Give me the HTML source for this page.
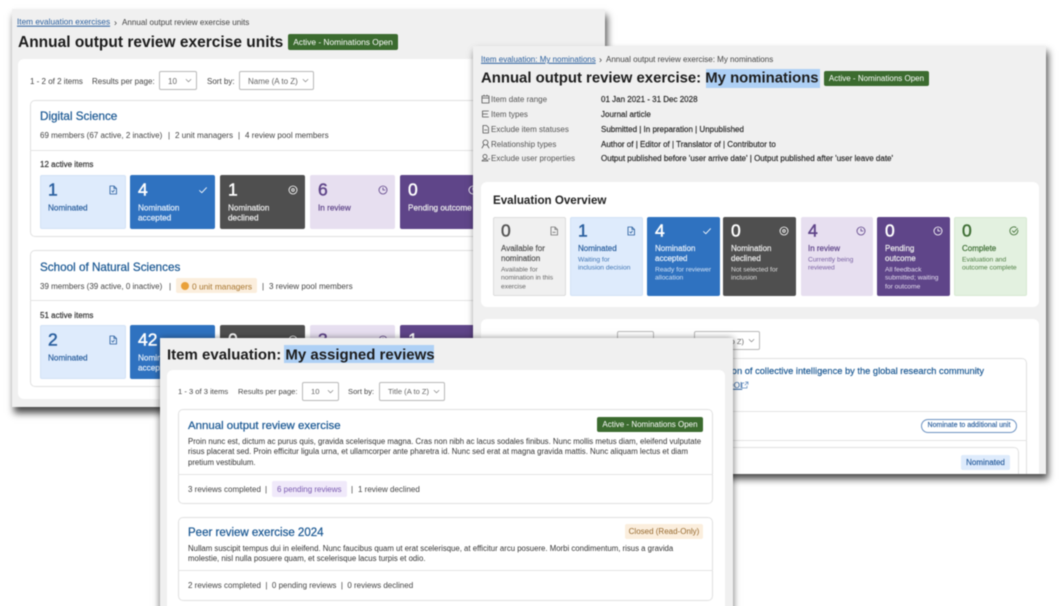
<!DOCTYPE html>
<html lang="en"><head><meta charset="utf-8"><title>Item evaluation</title>
<style>
html,body{margin:0;padding:0;background:#fff;width:1063px;height:606px;overflow:hidden}
body{font-family:"Liberation Sans",sans-serif;color:#333}
#clip{position:relative;width:1063px;height:606px;overflow:hidden;contain:strict}
#root{position:absolute;left:0;top:0;width:1080px;height:630px;overflow:hidden;filter:blur(.4px)}
.sh{position:absolute}
.win{position:absolute;overflow:hidden;background:#f0f0f0}
.in{position:absolute;width:1063px;height:630px}
.b{position:absolute;box-sizing:border-box}
.t{position:absolute;white-space:nowrap;line-height:1;transform:translateY(calc(-50% + .8px));font-size:8px;color:#444}
.n{font-size:17.5px !important;transform:translateY(-50%);-webkit-text-stroke:.45px currentColor}
.m{-webkit-text-stroke:.2px currentColor}
.w1{font-size:8.2px}
.s{font-size:6.7px}
.h{font-weight:bold;font-size:15px;color:#1c1c1c}
.card{position:absolute;box-sizing:border-box;background:#fff;border-radius:6px}
.box{position:absolute;box-sizing:border-box;background:#fff;border:1px solid #e1e1e1;border-radius:5px}
.line{position:absolute;height:1px;background:#e4e4e4}
.sel{position:absolute;box-sizing:border-box;background:#fff;border:1px solid #b9b9b9;border-radius:2px;height:19px}
.sel svg{position:absolute;right:4px;top:6px}
.bd{position:absolute;box-sizing:border-box;border-radius:2px;background:#3b6b2f;color:#fff;font-size:8px;line-height:16px;text-align:center;white-space:nowrap}
.ti{position:absolute;box-sizing:border-box;border-radius:2px}
.tt{color:#1d5a94;font-weight:normal;-webkit-text-stroke:.25px #1d5a94}
svg.i{position:absolute;fill:none;stroke:currentColor;stroke-width:.85;stroke-linecap:round;stroke-linejoin:round}
a{color:#2a5f9e;text-decoration:underline}
.nom{background:#deebfc;color:#2a5f9e;border:1px solid #d2e2f6}
.acc{background:#2f72c0;color:#fff}
.dec{background:#4f4f4f;color:#fff}
.rev{background:#e7dff0;color:#5f4589}
.pen{background:#5f4589;color:#fff}
.ava{background:#f0f0f0;color:#555;border:1px solid #dcdcdc}
.com{background:#e3f1e0;color:#3f6f35;border:1px solid #d7e9d2}
</style></head><body>
<svg width="0" height="0" style="position:absolute">
<defs>
<symbol id="doc" viewBox="0 0 10 10"><path d="M2 1h4l2.500 2.500V9H2zM6 1v2.500h2.500M3.800 6l1 1 1.500-1.800"/></symbol>
<symbol id="doc2" viewBox="0 0 10 10"><path d="M2 1h4l2.500 2.500V9H2zM6 1v2.500h2.500M3.800 6.300h2.500"/></symbol>
<symbol id="chk" viewBox="0 0 10 10"><path d="M1.500 5.500l2.300 2.200 4.700-5"/></symbol>
<symbol id="xc" viewBox="0 0 10 10"><circle cx="5" cy="5" r="4"/><circle cx="5" cy="5" r="1.300"/></symbol>
<symbol id="clk" viewBox="0 0 10 10"><circle cx="5" cy="5" r="4"/><path d="M5 2.800V5h2"/></symbol>
<symbol id="cc" viewBox="0 0 10 10"><path d="M8.800 4.200A4 4 0 1 1 7 1.500M3.400 4.800l1.500 1.500 3.600-3.800"/></symbol>
<symbol id="dn" viewBox="0 0 8 5"><path d="M1 1l3 3 3-3" fill="none" stroke="#777" stroke-width=".8"/></symbol>
</defs></svg>
<div id="clip">
<div id="root">

<!-- WINDOW 1 -->
<div class="sh" style="left:12px;top:9px;width:593px;height:398px;box-shadow:2px 6px 7px rgba(0,0,0,.72)"></div>
<div class="win" style="left:12px;top:9px;width:593px;height:398px"><div class="in" style="left:-12px;top:-9px">
<div class="t" style="left:17px;top:22px;font-size:8.250px"><a>Item evaluation exercises</a></div>
<div class="t" style="left:114px;top:22px;font-size:9px">&#8250;</div>
<div class="t" style="left:122px;top:22px;font-size:8.100px">Annual output review exercise units</div>
<div class="t h" style="left:18px;top:42px;font-size:15.500px">Annual output review exercise units</div>
<div class="bd" style="left:288px;top:34px;width:110px;height:16px;font-size:8.400px">Active - Nominations Open</div>
<div class="card" style="left:18px;top:59px;width:581px;height:340px"></div>
<div class="t" style="left:30px;top:81px">1 - 2 of 2 items</div>
<div class="t" style="left:92px;top:81px">Results per page:</div>
<div class="sel" style="left:159px;top:71px;width:38px"><svg width="7" height="5"><use href="#dn"/></svg></div>
<div class="t" style="left:168px;top:81px;color:#666">10</div>
<div class="t" style="left:207px;top:81px">Sort by:</div>
<div class="sel" style="left:239px;top:71px;width:75px"><svg width="7" height="5"><use href="#dn"/></svg></div>
<div class="t" style="left:248px;top:81px;color:#666">Name (A to Z)</div>

<div class="box" style="left:30px;top:100px;width:560px;height:137px"></div>
<div class="t tt" style="left:40px;top:116px;font-size:11.700px">Digital Science</div>
<div class="t" style="left:40px;top:135px">69 members (67 active, 2 inactive)</div>
<div class="t" style="left:168px;top:135px">|</div>
<div class="t" style="left:175px;top:135px;font-size:8.100px">2 unit managers</div>
<div class="t" style="left:238px;top:135px">|</div>
<div class="t" style="left:245px;top:135px;font-size:8.100px">4 review pool members</div>
<div class="line" style="left:30px;top:150px;width:560px"></div>
<div class="t m" style="left:40px;top:164px;color:#333">12 active items</div>

<div class="ti nom" style="left:40px;top:175px;width:86px;height:54px"></div>
<div class="t n" style="left:48px;top:190px;color:#2a5f9e">1</div>
<div class="t m w1" style="left:48px;top:208px;color:#2a5f9e">Nominated</div>
<svg class="i" style="left:108px;top:185px;color:#2a5f9e" width="10" height="10"><use href="#doc"/></svg>

<div class="ti acc" style="left:130px;top:175px;width:85px;height:54px"></div>
<div class="t n" style="left:138px;top:190px;color:#fff">4</div>
<div class="t m w1" style="left:138px;top:208px;color:#e6effa">Nomination</div>
<div class="t m w1" style="left:138px;top:218px;color:#e6effa">accepted</div>
<svg class="i" style="left:198px;top:185px;color:#fff" width="10" height="10"><use href="#chk"/></svg>

<div class="ti dec" style="left:220px;top:175px;width:85px;height:54px"></div>
<div class="t n" style="left:228px;top:190px;color:#fff">1</div>
<div class="t m w1" style="left:228px;top:208px;color:#eee">Nomination</div>
<div class="t m w1" style="left:228px;top:218px;color:#eee">declined</div>
<svg class="i" style="left:288px;top:185px;color:#fff" width="10" height="10"><use href="#xc"/></svg>

<div class="ti rev" style="left:310px;top:175px;width:85px;height:54px"></div>
<div class="t n" style="left:318px;top:190px;color:#5f4589">6</div>
<div class="t m w1" style="left:318px;top:208px;color:#5f4589">In review</div>
<svg class="i" style="left:378px;top:185px;color:#5f4589" width="10" height="10"><use href="#clk"/></svg>

<div class="ti pen" style="left:400px;top:175px;width:85px;height:54px"></div>
<div class="t n" style="left:408px;top:190px;color:#fff">0</div>
<div class="t m w1" style="left:408px;top:208px;color:#eee">Pending outcome</div>
<svg class="i" style="left:468px;top:185px;color:#fff" width="10" height="10"><use href="#clk"/></svg>

<div class="box" style="left:30px;top:250px;width:560px;height:137px"></div>
<div class="t tt" style="left:40px;top:267px;font-size:11.700px">School of Natural Sciences</div>
<div class="t" style="left:40px;top:286px">39 members (39 active, 0 inactive)</div>
<div class="t" style="left:169px;top:286px">|</div>
<div class="b" style="left:176px;top:278px;width:81px;height:15px;background:#fbeedd;border-radius:2px"></div>
<div class="b" style="left:181px;top:282px;width:8px;height:8px;border-radius:50%;background:#e9a13b"></div>
<div class="t" style="left:192px;top:286px;color:#a8762f;font-size:8.400px">0 unit managers</div>
<div class="t" style="left:262px;top:286px">|</div>
<div class="t" style="left:269px;top:286px;font-size:8.100px">3 review pool members</div>
<div class="line" style="left:30px;top:300px;width:560px"></div>
<div class="t m" style="left:40px;top:315px;color:#333">51 active items</div>

<div class="ti nom" style="left:40px;top:325px;width:86px;height:54px"></div>
<div class="t n" style="left:48px;top:340px;color:#2a5f9e">2</div>
<div class="t m w1" style="left:48px;top:358px;color:#2a5f9e">Nominated</div>
<svg class="i" style="left:108px;top:335px;color:#2a5f9e" width="10" height="10"><use href="#doc"/></svg>
<div class="ti acc" style="left:130px;top:325px;width:85px;height:54px"></div>
<div class="t n" style="left:138px;top:340px;color:#fff">42</div>
<div class="t m w1" style="left:138px;top:358px;color:#e6effa">Nomination</div>
<div class="t m w1" style="left:138px;top:368px;color:#e6effa">accepted</div>
<div class="ti dec" style="left:220px;top:325px;width:85px;height:54px"></div>
<div class="t n" style="left:228px;top:340px;color:#fff">0</div>
<svg class="i" style="left:288px;top:335px;color:#fff" width="10" height="10"><use href="#xc"/></svg>
<div class="ti rev" style="left:310px;top:325px;width:85px;height:54px"></div>
<div class="t n" style="left:318px;top:340px;color:#5f4589">3</div>
<svg class="i" style="left:378px;top:335px;color:#5f4589" width="10" height="10"><use href="#clk"/></svg>
<div class="ti pen" style="left:400px;top:325px;width:85px;height:54px"></div>
<div class="t n" style="left:408px;top:340px;color:#fff">1</div>
</div></div>

<!-- WINDOW 2 -->
<div class="sh" style="left:473px;top:46px;width:573px;height:428px;box-shadow:2px 5px 7px rgba(0,0,0,.72)"></div>
<div class="win" style="left:473px;top:46px;width:573px;height:428px"><div class="in" style="left:-473px;top:-46px">
<div class="t" style="left:481px;top:59px"><a>Item evaluation: My nominations</a></div>
<div class="t" style="left:599px;top:59px;font-size:9px">&#8250;</div>
<div class="t" style="left:606px;top:59px">Annual output review exercise: My nominations</div>
<div class="b" style="left:705.500px;top:69px;width:114px;height:19px;background:#aed0f5"></div>
<div class="t h" style="left:481px;top:78px;font-size:14.900px">Annual output review exercise: My nominations</div>
<div class="bd" style="left:824px;top:71px;width:105px;height:15px;line-height:15px">Active - Nominations Open</div>

<svg class="i" style="left:481px;top:94px;color:#555" width="9" height="10" viewBox="0 0 9 10"><path d="M1 2h7v7H1zM1 4h7M3 1v1M6 1v1" stroke-width=".8"/></svg>
<svg class="i" style="left:481px;top:109px;color:#555" width="9" height="10" viewBox="0 0 9 10"><path d="M1.500 2v6M1.500 2h6M1.500 5h5M1.500 8h6" stroke-width=".8"/></svg>
<svg class="i" style="left:481px;top:124px;color:#555" width="9" height="10" viewBox="0 0 9 10"><path d="M2 1.500h3.500l2 2V9H2zM3.500 6h2.500" stroke-width=".8"/></svg>
<svg class="i" style="left:481px;top:139px;color:#555" width="9" height="10" viewBox="0 0 9 10"><circle cx="4.500" cy="3.500" r="2.500" stroke-width=".8"/><path d="M1 9l2-3.500M8 9L6 5.500" stroke-width=".8"/></svg>
<svg class="i" style="left:481px;top:153px;color:#555" width="9" height="10" viewBox="0 0 9 10"><circle cx="4" cy="3.500" r="2" stroke-width=".8"/><path d="M1 8c.5-2 5.500-2 6 0zM7.500 6h1.300" stroke-width=".8"/></svg>

<div class="t" style="left:491px;top:99px;color:#555">Item date range</div>
<div class="t" style="left:491px;top:114px;color:#555">Item types</div>
<div class="t" style="left:491px;top:129px;color:#555">Exclude item statuses</div>
<div class="t" style="left:491px;top:144px;color:#555">Relationship types</div>
<div class="t" style="left:491px;top:158px;color:#555">Exclude user properties</div>
<div class="t m" style="left:601px;top:99px;color:#222;-webkit-text-stroke:.15px #222">01 Jan 2021 - 31 Dec 2028</div>
<div class="t m" style="left:601px;top:114px;color:#222;-webkit-text-stroke:.15px #222">Journal article</div>
<div class="t m" style="left:601px;top:129px;color:#222;-webkit-text-stroke:.15px #222">Submitted | In preparation | Unpublished</div>
<div class="t m" style="left:601px;top:144px;color:#222;-webkit-text-stroke:.15px #222">Author of | Editor of | Translator of | Contributor to</div>
<div class="t m" style="left:601px;top:158px;color:#222;-webkit-text-stroke:.15px #222;font-size:8.020px">Output published before 'user arrive date' | Output published after 'user leave date'</div>

<div class="card" style="left:481px;top:182px;width:558px;height:125px"></div>
<div class="t" style="left:493px;top:200px;font-size:11.600px;color:#222;font-weight:bold">Evaluation Overview</div>

<div class="ti ava" style="left:493px;top:217px;width:73px;height:79px"></div>
<div class="t n" style="left:501px;top:231px;color:#555">0</div>
<div class="t m" style="left:501px;top:248px;color:#555">Available for</div>
<div class="t m" style="left:501px;top:258px;color:#555">nomination</div>
<div class="t s" style="left:501px;top:269.500px;color:#666">Available for</div>
<div class="t s" style="left:501px;top:278px;color:#666">nomination in this</div>
<div class="t s" style="left:501px;top:287px;color:#666">exercise</div>
<svg class="i" style="left:549px;top:226px;color:#777" width="10" height="10"><use href="#doc2"/></svg>

<div class="ti nom" style="left:570px;top:217px;width:73px;height:79px"></div>
<div class="t n" style="left:578px;top:231px;color:#2a5f9e">1</div>
<div class="t m" style="left:578px;top:248px;color:#2a5f9e">Nominated</div>
<div class="t s" style="left:578px;top:259.500px;color:#3f74b3">Waiting for</div>
<div class="t s" style="left:578px;top:268px;color:#3f74b3">inclusion decision</div>
<svg class="i" style="left:626px;top:226px;color:#2a5f9e" width="10" height="10"><use href="#doc"/></svg>

<div class="ti acc" style="left:647px;top:217px;width:73px;height:79px"></div>
<div class="t n" style="left:655px;top:231px;color:#fff">4</div>
<div class="t m" style="left:655px;top:248px;color:#e6effa">Nomination</div>
<div class="t m" style="left:655px;top:258px;color:#e6effa">accepted</div>
<div class="t s" style="left:655px;top:269.500px;color:#cfe0f5">Ready for reviewer</div>
<div class="t s" style="left:655px;top:278px;color:#cfe0f5">allocation</div>
<svg class="i" style="left:702px;top:226px;color:#fff" width="10" height="10"><use href="#chk"/></svg>

<div class="ti dec" style="left:723px;top:217px;width:73px;height:79px"></div>
<div class="t n" style="left:731px;top:231px;color:#fff">0</div>
<div class="t m" style="left:731px;top:248px;color:#eee">Nomination</div>
<div class="t m" style="left:731px;top:258px;color:#eee">declined</div>
<div class="t s" style="left:731px;top:269.500px;color:#ddd">Not selected for</div>
<div class="t s" style="left:731px;top:278px;color:#ddd">inclusion</div>
<svg class="i" style="left:779px;top:226px;color:#fff" width="10" height="10"><use href="#xc"/></svg>

<div class="ti rev" style="left:801px;top:217px;width:72px;height:79px"></div>
<div class="t n" style="left:808px;top:231px;color:#5f4589">4</div>
<div class="t m" style="left:808px;top:248px;color:#5f4589">In review</div>
<div class="t s" style="left:808px;top:259.500px;color:#7a62a3">Currently being</div>
<div class="t s" style="left:808px;top:268px;color:#7a62a3">reviewed</div>
<svg class="i" style="left:856px;top:226px;color:#5f4589" width="10" height="10"><use href="#clk"/></svg>

<div class="ti pen" style="left:877px;top:217px;width:73px;height:79px"></div>
<div class="t n" style="left:885px;top:231px;color:#fff">0</div>
<div class="t m" style="left:885px;top:248px;color:#eee">Pending</div>
<div class="t m" style="left:885px;top:258px;color:#eee">outcome</div>
<div class="t s" style="left:885px;top:269.500px;color:#e3dcee">All feedback</div>
<div class="t s" style="left:885px;top:278px;color:#e3dcee">submitted; waiting</div>
<div class="t s" style="left:885px;top:287px;color:#e3dcee">for outcome</div>
<svg class="i" style="left:933px;top:226px;color:#fff" width="10" height="10"><use href="#clk"/></svg>

<div class="ti com" style="left:954px;top:217px;width:73px;height:79px"></div>
<div class="t n" style="left:962px;top:231px;color:#3f6f35">0</div>
<div class="t m" style="left:962px;top:248px;color:#3f6f35">Complete</div>
<div class="t s" style="left:962px;top:259.500px;color:#4f7f44">Evaluation and</div>
<div class="t s" style="left:962px;top:268px;color:#4f7f44">outcome complete</div>
<svg class="i" style="left:1009px;top:226px;color:#3f6f35" width="10" height="10"><use href="#cc"/></svg>

<div class="card" style="left:481px;top:319px;width:558px;height:160px"></div>
<div class="sel" style="left:617px;top:331px;width:37px"></div>
<div class="sel" style="left:694px;top:331px;width:66px"><svg width="7" height="5"><use href="#dn"/></svg></div>
<div class="t" style="left:703px;top:341px;color:#666;font-size:7.600px">Title (A to Z)</div>
<div class="box" style="left:493px;top:358px;width:534px;height:130px"></div>
<div class="t tt" style="right:79px;top:371px;font-size:9.300px;-webkit-text-stroke:.2px #1d5a94">Evaluation of collective intelligence by the global research community</div>
<div class="t" style="left:728px;top:385px"><a>DOI</a></div>
<svg class="i" style="left:741px;top:381px;color:#5b86ba" width="8" height="8" viewBox="0 0 8 8"><path d="M6 5v2H1V2h2M4.500 1H7v2.500M7 1L4 4" stroke-width=".7"/></svg>
<div class="line" style="left:493px;top:411px;width:534px"></div>
<div class="b" style="left:921px;top:419px;width:96px;height:14px;border:1px solid #6d93c2;border-radius:7px;background:#fff;color:#2a5f9e;font-size:7px;line-height:12px;text-align:center;-webkit-text-stroke:.15px #2a5f9e;white-space:nowrap">Nominate to additional unit</div>
<div class="line" style="left:493px;top:440px;width:534px"></div>
<div class="box" style="left:503px;top:447px;width:516px;height:60px"></div>
<div class="b" style="left:961px;top:455px;width:49px;height:15px;background:#deebfc;border-radius:2px;color:#2a5f9e;font-size:8px;line-height:15px;text-align:center;-webkit-text-stroke:.15px #2a5f9e">Nominated</div>
</div></div>

<!-- WINDOW 3 -->
<div class="sh" style="left:160px;top:338px;width:573px;height:290px;box-shadow:0 1px 7px rgba(0,0,0,.6)"></div>
<div class="win" style="left:160px;top:338px;width:573px;height:290px"><div class="in" style="left:-160px;top:-338px">
<div class="b" style="left:284px;top:345px;width:150px;height:18px;background:#aed0f5"></div>
<div class="t h" style="left:167px;top:354px">Item evaluation: My assigned reviews</div>
<div class="card" style="left:167px;top:370px;width:558px;height:260px"></div>
<div class="t" style="left:178px;top:391px;font-size:7.600px">1 - 3 of 3 items</div>
<div class="t" style="left:238px;top:391px;font-size:7.600px">Results per page:</div>
<div class="sel" style="left:302px;top:382px;width:37px"><svg width="7" height="5"><use href="#dn"/></svg></div>
<div class="t" style="left:311px;top:391px;color:#666;font-size:7.600px">10</div>
<div class="t" style="left:348px;top:391px;font-size:7.600px">Sort by:</div>
<div class="sel" style="left:379px;top:382px;width:66px"><svg width="7" height="5"><use href="#dn"/></svg></div>
<div class="t" style="left:388px;top:391px;color:#666;font-size:7.600px">Title (A to Z)</div>

<div class="box" style="left:178px;top:409px;width:535px;height:95px"></div>
<div class="t tt" style="left:188px;top:425.500px;font-size:11.450px">Annual output review exercise</div>
<div class="bd" style="left:597px;top:417px;width:106px;height:15px;line-height:15px">Active - Nominations Open</div>
<div class="t" style="left:188px;top:441px;font-size:7.800px;color:#333">Proin nunc est, dictum ac purus quis, gravida scelerisque magna. Cras non nibh ac lacus sodales finibus. Nunc mollis metus diam, eleifend vulputate</div>
<div class="t" style="left:188px;top:451px;font-size:7.800px;color:#333">risus placerat sed. Proin efficitur ligula urna, et ullamcorper ante pharetra id. Nunc sed erat at magna gravida mattis. Nunc aliquam lectus et diam</div>
<div class="t" style="left:188px;top:462px;font-size:7.800px;color:#333">pretium vestibulum.</div>
<div class="line" style="left:178px;top:474px;width:535px"></div>
<div class="t" style="left:188px;top:489px">3 reviews completed</div>
<div class="t" style="left:265px;top:489px">|</div>
<div class="b" style="left:272px;top:481px;width:75px;height:16px;background:#f0e9fa;border-radius:2px"></div>
<div class="t" style="left:277px;top:489px;color:#7a5bb0">6 pending reviews</div>
<div class="t" style="left:351px;top:489px">|</div>
<div class="t" style="left:358px;top:489px">1 review declined</div>

<div class="box" style="left:178px;top:517px;width:535px;height:84px"></div>
<div class="t tt" style="left:188px;top:532.500px;font-size:11.500px">Peer review exercise 2024</div>
<div class="b" style="left:625px;top:524px;width:78px;height:15px;background:#fbeedd;border-radius:2px;color:#96692e;font-size:8px;line-height:15px;text-align:center;white-space:nowrap">Closed (Read-Only)</div>
<div class="t" style="left:188px;top:548px;font-size:7.800px;color:#333">Nullam suscipit tempus dui in eleifend. Nunc faucibus quam ut erat scelerisque, at efficitur arcu posuere. Morbi condimentum, risus a gravida</div>
<div class="t" style="left:188px;top:558px;font-size:7.800px;color:#333">molestie, nisl nulla posuere quam, et scelerisque lacus turpis et odio.</div>
<div class="line" style="left:178px;top:570px;width:535px"></div>
<div class="t" style="left:188px;top:585px">2 reviews completed&nbsp; | &nbsp;0 pending reviews&nbsp; | &nbsp;0 reviews declined</div>
</div></div>

</div>
</div>
</body></html>
